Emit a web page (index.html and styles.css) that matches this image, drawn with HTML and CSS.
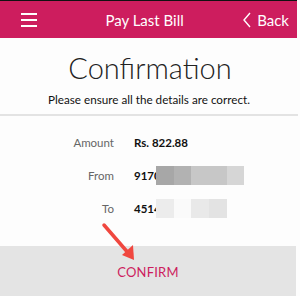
FILE: index.html
```html
<!DOCTYPE html>
<html lang="en">
<head>
  <meta charset="UTF-8">
  <title>Pay Last Bill</title>
  <link rel="stylesheet" href="styles.css">
</head>
<body>
  <div class="screen">
    <header class="topbar">
      <span class="menu">
        <i></i><i></i><i></i>
      </span>
      <span class="title">Pay Last Bill</span>
      <span class="back">
        <svg width="10" height="16" viewBox="0 0 10 16"><path d="M8 1 L2 8 L8 15" fill="none" stroke="#fff" stroke-width="1.4"/></svg>
        Back
      </span>
    </header>

    <h1>Confirmation</h1>
    <p class="hint">Please ensure all the details are correct.</p>

    <div class="details">
      <div class="row">
        <span class="label">Amount</span>
        <span class="value">Rs. 822.88</span>
      </div>
      <div class="row">
        <span class="label">From</span>
        <span class="value masked">9170
          <span class="blur from">
            <i class="c1"></i><i class="c2"></i><i class="c3"></i><i class="c4"></i>
          </span>
        </span>
      </div>
      <div class="row">
        <span class="label">To</span>
        <span class="value masked">4514
          <span class="blur to">
            <i class="c1"></i><i class="c2"></i><i class="c3"></i><i class="c4"></i>
          </span>
        </span>
      </div>
    </div>

    <svg class="arrow" width="40" height="44" viewBox="0 0 40 44">
      <line x1="3" y1="3" x2="29" y2="33" stroke="#f0473f" stroke-width="3.5" stroke-linecap="round"/>
      <polygon points="33,38 21,33 32,23" fill="#f0473f"/>
    </svg>

    <button class="confirm">CONFIRM</button>
  </div>
</body>
</html>
```

FILE: styles.css
```css
:root {
  --pink: #cd1d5e;
  --grey: #e4e4e4;
}

body {
  margin: 0;
  font-family: Lato, 'Open Sans', sans-serif;
  background-color: #fff;
}

.screen {
  position: relative;
  width: 300px;
  height: 296px;
  overflow: hidden;
  background-color: #fdfdfd;
  display: flex;
  flex-direction: column;
}

.topbar {
  height: 37px;
  flex-shrink: 0;
  background-color: var(--pink);
  color: #fff;
  display: flex;
  align-items: center;
  padding: 0 8px 0 21px;
  margin-right: 3px;
  border-top: 1px solid #111;
}

.menu {
  display: flex;
  flex-direction: column;
  gap: 4px;
  width: 16px;
}

.menu i {
  display: block;
  height: 2px;
  background-color: #fff;
}

.title {
  flex: 1;
  text-align: center;
  font-size: 15px;
  padding-left: 10px;
}

.back {
  display: flex;
  align-items: center;
  gap: 5px;
  font-size: 15px;
}

h1 {
  margin: 14px 0 0;
  text-align: center;
  font-weight: 300;
  font-size: 29px;
  line-height: 32px;
  color: #222;
}

.hint {
  margin: 8px 2px 0 0;
  text-align: center;
  font-size: 11.7px;
  line-height: 14px;
  color: #111;
  padding-bottom: 8px;
  border-bottom: 2px solid #e3e3e3;
}

.details {
  padding-top: 10px;
}

.row {
  display: flex;
  height: 33px;
  align-items: center;
  font-size: 11.5px;
}

.label {
  width: 114px;
  text-align: right;
  color: #666;
}

.value {
  margin-left: 20px;
  font-weight: bold;
  color: #111;
}

.masked {
  position: relative;
}

.blur {
  position: absolute;
  left: 22px;
  top: -3px;
  display: flex;
  height: 19px;
}

.blur i {
  display: block;
  height: 100%;
}

.from .c1 { width: 18px; background-color: #a7a7a7; }
.from .c2 { width: 17px; background-color: #b2b2b2; }
.from .c3 { width: 36px; background-color: #c7c7c7; }
.from .c4 { width: 17px; background-color: #d6d6d6; }

.to .c1 { width: 18px; background-color: #ececec; }
.to .c2 { width: 17px; background-color: #fafafa; }
.to .c3 { width: 18px; background-color: #e9e9e9; }
.to .c4 { width: 18px; background-color: #e3e3e3; }

.arrow {
  position: absolute;
  left: 101px;
  top: 222px;
}

.confirm {
  margin-top: auto;
  height: 50px;
  margin-right: 4px;
  border: none;
  background-color: var(--grey);
  color: var(--pink);
  font-family: inherit;
  font-size: 13px;
  letter-spacing: 0.2px;
  padding-top: 2px;
}
```
